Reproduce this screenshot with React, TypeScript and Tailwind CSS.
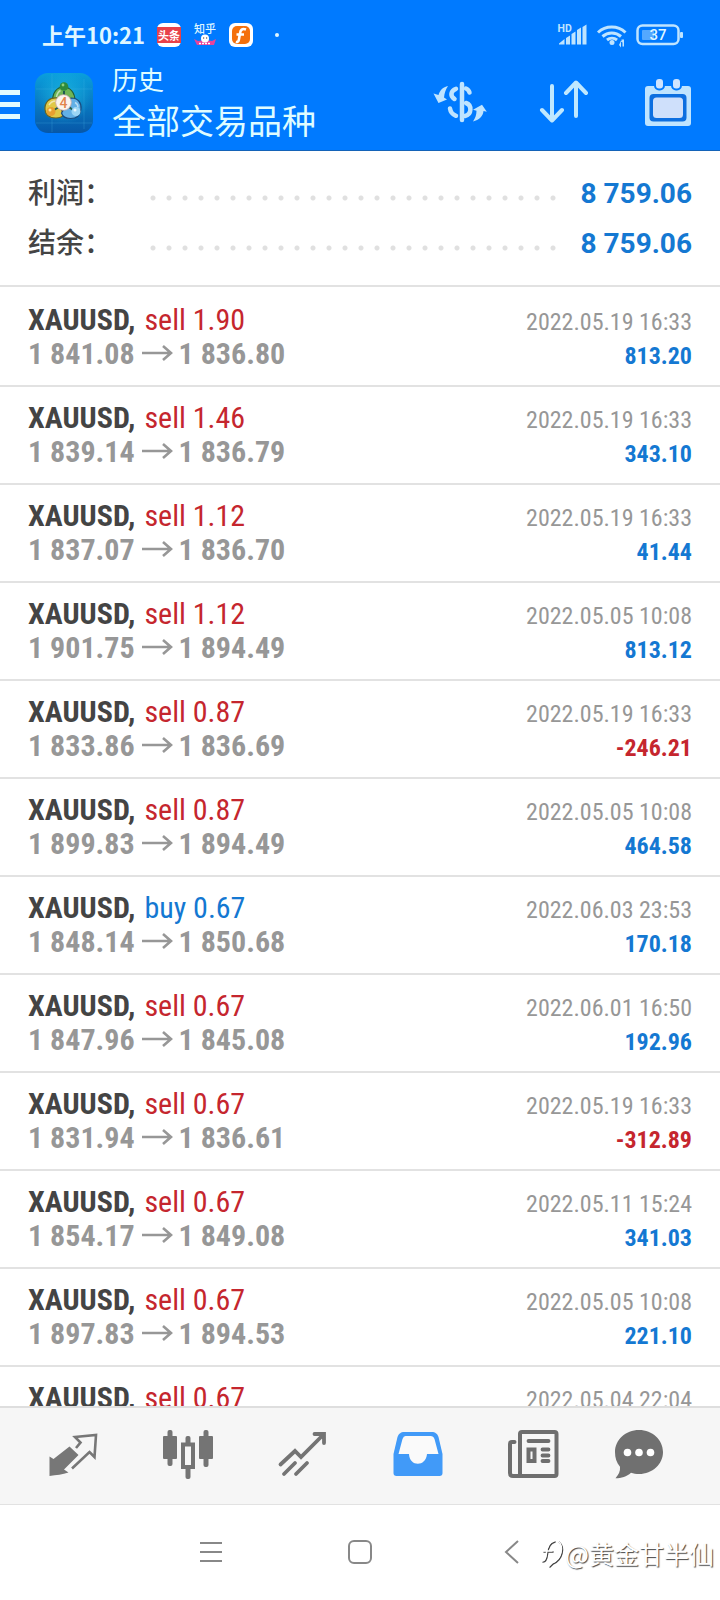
import type { ReactNode } from 'react';

type Deal = {
  side: 'sell' | 'buy';
  volume: string;
  open: string;
  close: string;
  time: string;
  profit: string;
};

const deals: Deal[] = [
  { side: 'sell', volume: '1.90', open: '1 841.08', close: '1 836.80', time: '2022.05.19 16:33', profit: '813.20' },
  { side: 'sell', volume: '1.46', open: '1 839.14', close: '1 836.79', time: '2022.05.19 16:33', profit: '343.10' },
  { side: 'sell', volume: '1.12', open: '1 837.07', close: '1 836.70', time: '2022.05.19 16:33', profit: '41.44' },
  { side: 'sell', volume: '1.12', open: '1 901.75', close: '1 894.49', time: '2022.05.05 10:08', profit: '813.12' },
  { side: 'sell', volume: '0.87', open: '1 833.86', close: '1 836.69', time: '2022.05.19 16:33', profit: '-246.21' },
  { side: 'sell', volume: '0.87', open: '1 899.83', close: '1 894.49', time: '2022.05.05 10:08', profit: '464.58' },
  { side: 'buy', volume: '0.67', open: '1 848.14', close: '1 850.68', time: '2022.06.03 23:53', profit: '170.18' },
  { side: 'sell', volume: '0.67', open: '1 847.96', close: '1 845.08', time: '2022.06.01 16:50', profit: '192.96' },
  { side: 'sell', volume: '0.67', open: '1 831.94', close: '1 836.61', time: '2022.05.19 16:33', profit: '-312.89' },
  { side: 'sell', volume: '0.67', open: '1 854.17', close: '1 849.08', time: '2022.05.11 15:24', profit: '341.03' },
  { side: 'sell', volume: '0.67', open: '1 897.83', close: '1 894.53', time: '2022.05.05 10:08', profit: '221.10' },
  { side: 'sell', volume: '0.67', open: '', close: '', time: '2022.05.04 22:04', profit: '' },
];

const summary = [
  { label: '利润', value: '8 759.06' },
  { label: '结余', value: '8 759.06' },
];

function StatusBar() {
  return (
    <div className="flex h-[70px] items-center justify-between pl-[42px] pr-[37px] text-[#dff6ff]">
      <div className="flex items-center">
        <span className="pb-[2px] text-[22px] leading-8 font-bold">上午10:21</span>
        <span className="ml-3 flex h-6 w-6 items-center justify-center rounded-md bg-white">
          <span className="flex h-4 w-6 items-center justify-center bg-[#e8414a] text-[11px] leading-none font-bold text-white">头条</span>
        </span>
        <span className="ml-3 flex h-6 w-6 flex-col items-center text-[11px] leading-none font-medium">
          <span className="whitespace-nowrap">知乎</span>
          <svg width="24" height="12" viewBox="0 0 24 12" aria-hidden="true">
            <path d="M1 5l4 2 7-1 7 1 4-2-2 6H4z" fill="#e7439a" />
            <circle cx="12" cy="4.500" r="4" fill="#fff" />
            <path d="M10 4h1.200M13 4h1.200" stroke="#333" />
            <path d="M6 9.500h12" stroke="#fff" strokeWidth="1.500" strokeDasharray="2 1" />
          </svg>
        </span>
        <svg className="ml-3" width="24" height="24" viewBox="0 0 24 24" aria-hidden="true">
          <rect width="24" height="24" rx="6" fill="#fff" />
          <rect x="3" y="3" width="18" height="18" rx="5" fill="#f4700c" />
          <path d="M17 6.500c-4-1.500-5.500.5-6 4L9.800 17c-.3 1.600-1.500 2.300-3 2M7.500 11.500H15" fill="none" stroke="#fff" strokeWidth="2.600" />
        </svg>
        <span className="ml-[22px] h-1 w-1 rounded-full bg-[#dff6ff]" />
      </div>
      <svg width="126" height="26" viewBox="557 22 126 26" fill="none" aria-hidden="true">
        <text x="557.500" y="32" fontSize="10.500" fontWeight="700" fontFamily="Roboto, sans-serif" fill="#bfe4ff">HD</text>
        <g fill="#bfe4ff">
          <path d="M559 44.500v-1l5.500-4.500v5.500zM566 38l4-2.500v9h-4zM571.500 34l4-2.500v13h-4zM577 30l4-2.500v17h-4zM582.500 27l4-2.500v20h-4z" />
          <circle cx="612" cy="42.500" r="2.500" />
          <path d="M620 41h1.500v-1.500l2.500 0v7h-1.500v-4zM619 45l2 2.500V41z" />
          <rect x="680" y="32" width="3" height="6" rx="1" />
        </g>
        <path d="M598 32.500a20 20 0 0 1 27.500 0M602.500 36.500a14 14 0 0 1 18.500 0M607 40a8 8 0 0 1 10 0" stroke="#bfe4ff" strokeWidth="3" />
        <rect x="637.500" y="25.500" width="41" height="18.500" rx="5" stroke="#bfe4ff" strokeWidth="2.500" />
        <rect x="642" y="30" width="12" height="10" rx="1" fill="#54a8ff" />
        <text x="658" y="40" textAnchor="middle" fontSize="15" fontWeight="500" fontFamily="Roboto, sans-serif" fill="#dff6ff">37</text>
      </svg>
    </div>
  );
}

function AppLogo() {
  return (
    <svg width="60" height="60" viewBox="0 0 60 60" aria-hidden="true">
      <defs>
        <linearGradient id="tile" x1="0" y1="0" x2="0" y2="1">
          <stop offset="0" stopColor="#0a9fdc" />
          <stop offset="1" stopColor="#0757a8" />
        </linearGradient>
        <radialGradient id="glow">
          <stop offset="0" stopColor="#1fc0e4" stopOpacity=".75" />
          <stop offset="1" stopColor="#1fc0e4" stopOpacity="0" />
        </radialGradient>
      </defs>
      <rect x="1" width="58" height="60" rx="13" fill="url(#tile)" />
      <circle cx="30" cy="24" r="27" fill="url(#glow)" />
      <path d="M18 1v58M50 6v50M2 16h56M2 50h56" stroke="#49bde8" strokeOpacity=".25" />
      <path d="M18.500 28c0-8 4-14 11-14s11.500 6 11.500 14l-5 5H24z" fill="#6fb556" stroke="#1f5c33" strokeWidth="1.200" />
      <path d="M23 25c-8-1-12.500 5-12 11.500.3 6 5 8.500 11 8.500 3 0 6-1 7.500-3z" fill="#dfc947" stroke="#6b6420" strokeWidth="1.200" />
      <path d="M37 25c7.500 0 10.500 5 10 11-.5 6.500-5 9.500-10.500 9.500-5 0-8-2-9-5.500z" fill="#62b0e6" stroke="#1b4d80" strokeWidth="1.200" />
      <path d="M22.500 24c.5-3 2-5.500 4-6.500M15 32c1.500-2.500 4-4 6.500-4M41 29.500c2 1 3 3 3 5" fill="none" stroke="#fff" strokeOpacity=".55" strokeWidth="1.500" />
      <path d="M30 18v6M20 37l5-3M39 37l-4-3" stroke="#1f5c50" strokeWidth="2" />
      <circle cx="30" cy="13.500" r="4.300" fill="#2d8a3c" />
      <circle cx="29" cy="12" r="1.400" fill="#8fd07c" />
      <circle cx="17" cy="38.500" r="4.500" fill="#e8a030" />
      <circle cx="16" cy="37" r="1.500" fill="#fbeaa0" />
      <circle cx="42" cy="38.500" r="4.500" fill="#9bd6f5" />
      <circle cx="41" cy="37" r="1.500" fill="#e8f7ff" />
      <circle cx="29.500" cy="29.500" r="7.800" fill="#fbf5ee" stroke="#caa" strokeWidth=".8" />
      <text x="29.500" y="34.500" textAnchor="middle" fontSize="14" fontWeight="500" fontFamily="Roboto, sans-serif" fill="#e2854e">4</text>
    </svg>
  );
}

function DollarIcon() {
  return (
    <svg width="54" height="42" viewBox="433 81 54 42" fill="none" stroke="#bfe4ff" aria-hidden="true">
      <path d="M462 84v36" strokeWidth="4.500" strokeLinecap="round" />
      <path d="M456 88.800c-5 1.700-6.500 7-1.500 10.200M466 88.500c2 .8 3 2 3.500 4M450 108.500c.5 3.500 2.500 6 6 7.300M466 103c6 2 6 11.500-1 13" strokeWidth="4.500" strokeLinecap="round" />
      <path d="M448 86c-5 1-8 4-9.500 9l-5-1.500 5 9.500 8.500-3.500-3-2c.5-4.500 1.500-7.500 4-11.500z" fill="#bfe4ff" stroke="none" />
      <path d="M473 121.500c6-1.500 10-5 10.500-10.500l3.300.8-4.800-7-9 5 3.500 1c0 4-1 7-3.500 10.700z" fill="#bfe4ff" stroke="none" />
    </svg>
  );
}

function SortIcon() {
  return (
    <svg width="50" height="44" viewBox="539 81 50 44" fill="none" stroke="#bfe8ff" strokeWidth="4" strokeLinecap="round" strokeLinejoin="round" aria-hidden="true">
      <path d="M552 87v34M542 111l10 10.500 10-10.500M576 117V84M566 94l10-10.500 10 10.500" />
    </svg>
  );
}

function CalendarIcon() {
  return (
    <svg width="46" height="48" viewBox="645 78 46 48" aria-hidden="true">
      <rect x="645" y="86" width="46" height="40" rx="3" fill="#bfe4ff" />
      <g fill="#cfe4ff" stroke="#007aff" strokeWidth="2">
        <rect x="655" y="78" width="9" height="11.500" rx="4" />
        <rect x="672" y="78" width="9" height="11.500" rx="4" />
      </g>
      <rect x="649.500" y="94" width="37" height="27.500" rx="4" fill="#0d6fe0" />
      <rect x="653" y="97.500" width="30" height="20.500" rx="3.500" fill="#cfe0fb" />
    </svg>
  );
}

function Header() {
  return (
    <header className="shrink-0 border-b border-[#1463b8] bg-[#007aff]">
      <StatusBar />
      <div className="flex h-20 items-start">
        <button type="button" aria-label="菜单" className="mt-5 flex w-5 flex-col gap-[7px]">
          <span className="h-[5px] w-5 bg-[#e0fbff]" />
          <span className="h-[5px] w-5 bg-[#e0fbff]" />
          <span className="h-[5px] w-5 bg-[#e0fbff]" />
        </button>
        <div className="mt-[3px] ml-[14px]">
          <AppLogo />
        </div>
        <h1 className="-mt-[9px] ml-[18px] flex flex-1 flex-col font-normal text-[#dffcff]">
          <span className="text-[26px] leading-[36px]">历史</span>
          <span className="text-[34px] leading-[46px] whitespace-nowrap">全部交易品种</span>
        </h1>
        <button type="button" aria-label="货币" className="flex h-16 w-[104px] items-center justify-center"><DollarIcon /></button>
        <button type="button" aria-label="排序" className="flex h-16 w-[104px] items-center justify-center"><SortIcon /></button>
        <button type="button" aria-label="日期" className="flex h-16 w-[104px] items-center justify-center"><CalendarIcon /></button>
      </div>
    </header>
  );
}

function Summary() {
  return (
    <dl className="flex h-[136px] flex-col border-b-2 border-[#e2e2e2] pt-4">
      {summary.map((item) => (
        <div key={item.label} className="flex h-[50px] items-center px-7">
          <dt className="w-[117px] pb-[2px] text-[28px] leading-10 font-medium text-[#444]">{item.label}：</dt>
          <dd className="flex flex-1 items-center">
            <span className="mt-3 h-4 flex-1 bg-[radial-gradient(circle,#e0e0e0_2px,transparent_3px)] bg-[length:16px_16px]" />
            <span className="w-[131px] pt-1 text-right font-[Roboto] text-[28px] leading-10 font-bold text-[#1478d2]">{item.value}</span>
          </dd>
        </div>
      ))}
    </dl>
  );
}

function DealRow({ deal }: { deal: Deal }) {
  return (
    <li className="h-[98px] shrink-0 border-b-2 border-[#e2e2e2] px-7 pt-[14px] font-['Roboto_Condensed','Liberation_Sans_Narrow',Roboto,sans-serif]">
      <div className="flex h-[34px] items-baseline justify-between leading-[34px]">
        <span className="flex gap-[9px] text-[30px]">
          <b className="font-bold text-[#444]">XAUUSD,</b>
          <span className={deal.side === 'buy' ? 'text-[#1478d2]' : 'text-[#c5262e]'}>
            {deal.side} {deal.volume}
          </span>
        </span>
        <time className="text-2xl leading-[34px] text-[#979797]">{deal.time}</time>
      </div>
      {deal.open && (
        <div className="flex h-[34px] items-baseline justify-between leading-[34px] font-bold">
          <span className="flex items-baseline gap-[6px] text-[30px] text-[#979797]">
            {deal.open}
            <svg width="32" height="18" viewBox="0 0 32 18" fill="none" stroke="#979797" strokeWidth="2.600" className="self-center" aria-label="→">
              <path d="M1 8h29M22 1l8 7-8 7" />
            </svg>
            {deal.close}
          </span>
          <span className={deal.profit.startsWith('-') ? 'text-2xl leading-[34px] text-[#c5262e]' : 'text-2xl leading-[34px] text-[#1478d2]'}>{deal.profit}</span>
        </div>
      )}
    </li>
  );
}

function Tab({ label, last, children }: { label: string; last?: boolean; children: ReactNode }) {
  return (
    <button type="button" aria-label={label} className={last ? 'flex flex-[98] justify-center' : 'flex flex-[115] justify-center'}>
      {children}
    </button>
  );
}

function TabBar() {
  return (
    <nav className="flex h-[99px] shrink-0 items-start border-t-2 border-b border-t-[#dedede] border-b-[#e2e2e2] bg-[#f6f6f6] pt-5 pr-8 pl-4">
      <Tab label="行情">
        <svg width="52" height="52" viewBox="47 1428 52 52" fill="#777" aria-hidden="true">
          <path d="M69.500 1446.500l9 8.500-14.500 14.500 4.500 3c-6 2-12 2.500-19 3.500v-19.500l4 2.500z" />
          <path d="M76 1448l4.500-5.500-5.500-5.500 21-2-1.500 22-5-5-17.500 16.500" fill="none" stroke="#777" strokeWidth="2.600" />
        </svg>
      </Tab>
      <Tab label="图表">
        <svg width="52" height="52" viewBox="162.500 1428 52 52" fill="#747474" aria-hidden="true">
          <rect x="163.500" y="1436" width="14" height="23" rx="1" />
          <rect x="168" y="1430" width="5" height="36" rx="2" />
          <rect x="199.500" y="1436" width="14" height="23" rx="1" />
          <rect x="204" y="1430" width="5" height="37" rx="2" />
          <rect x="186" y="1436" width="5" height="43" rx="2" />
          <rect x="183.500" y="1444.500" width="10" height="22.500" fill="#f6f6f6" stroke="#747474" strokeWidth="4" />
        </svg>
      </Tab>
      <Tab label="交易">
        <svg width="52" height="52" viewBox="278 1428 52 52" fill="none" stroke="#747474" strokeWidth="3.800" strokeLinecap="round" aria-hidden="true">
          <path d="M281.500 1464.500l14.500-13.500 6 6 22-22M315.500 1434h9.500v9M285 1474l11-11M297 1474l11-11" />
        </svg>
      </Tab>
      <Tab label="历史">
        <svg width="52" height="52" viewBox="392.500 1428 52 52" aria-hidden="true">
          <path d="M405 1432h27c4 0 6 2 7 5l4 17v19q0 3-3 3h-43q-3 0-3-3v-19l4-17c1-3 3-5 7-5z" fill="#419af8" />
          <path d="M406 1436h25q3 0 4 3l4 15h-11.500c-1 13-17.500 13-18 0H399l4-15q1-3 3-3z" fill="#fafafa" />
        </svg>
      </Tab>
      <Tab label="新闻">
        <svg width="52" height="52" viewBox="507.500 1428 52 52" fill="none" stroke="#6e6e6e" strokeWidth="4" aria-hidden="true">
          <rect x="520.500" y="1432" width="36.500" height="44" rx="2" />
          <path d="M515 1442h-2.500q-2 0-2 2v29q0 3 3 3h8" strokeLinecap="round" />
          <path d="M529 1441h20M543 1449.500h6M543 1455.500h6M543 1461h6" strokeLinecap="round" strokeWidth="3.800" />
          <rect x="529" y="1449.500" width="6" height="11.500" strokeWidth="4" />
        </svg>
      </Tab>
      <Tab label="消息" last>
        <svg width="52" height="52" viewBox="613 1428 52 52" aria-hidden="true">
          <path d="M639 1430c13.500 0 24 9.800 24 22s-10.500 22-24 22c-3 0-5.500-.4-8-1.300-4.500 4-9.500 5.500-15.500 5.500 3-3.500 5-7 4.500-11.500-3.500-4-5-9-5-14.700 0-12.200 10.500-22 24-22z" fill="#707070" />
          <g fill="#fff">
            <circle cx="627.500" cy="1452.500" r="3.800" />
            <circle cx="639" cy="1452.500" r="3.800" />
            <circle cx="650.500" cy="1452.500" r="3.800" />
          </g>
        </svg>
      </Tab>
    </nav>
  );
}

function SystemBar() {
  return (
    <footer className="relative flex h-[95px] shrink-0 items-center justify-center bg-white pb-[2px]">
      <button type="button" aria-label="最近任务" className="flex w-[150px] justify-center">
        <svg width="24" height="24" viewBox="0 0 24 24" stroke="#888" strokeWidth="2" aria-hidden="true"><path d="M2 3h22M2 12h22M2 21h22" /></svg>
      </button>
      <button type="button" aria-label="主屏幕" className="flex w-[150px] justify-center">
        <svg width="26" height="26" viewBox="0 0 26 26" fill="none" stroke="#888" strokeWidth="2" aria-hidden="true"><rect x="2" y="2" width="22" height="22" rx="5" /></svg>
      </button>
      <button type="button" aria-label="返回" className="flex w-[150px] justify-center">
        <svg width="24" height="26" viewBox="0 0 24 26" fill="none" stroke="#888" strokeWidth="2" aria-hidden="true"><path d="M20 2L8 13l12 11" /></svg>
      </button>
      <div className="absolute right-[6px] bottom-[31px] flex items-center text-[25px] leading-8 text-white [text-shadow:1px_1px_1px_#444]">
        <svg width="26" height="32" viewBox="537 1542 26 32" fill="none" strokeLinecap="round" aria-hidden="true">
          <path d="M541 1567c3 0 4-3 4.500-8s2.500-11 7.500-12M542 1557h9M557 1547c6 5 4 18-6 22l-3 3" stroke="#444" strokeWidth="1.600" />
          <path d="M540 1566c3 0 4-3 4.500-8s2.500-11 7.500-12M541 1556h9M556 1546c6 5 4 18-6 22l-3 3" stroke="#fff" strokeWidth="1.600" />
        </svg>
        <span>@黄金甘半仙</span>
      </div>
    </footer>
  );
}

export default function App() {
  return (
    <div className="flex h-screen flex-col overflow-hidden bg-white font-['Noto_Sans_CJK_SC',sans-serif]">
      <Header />
      <main className="flex-1 overflow-hidden">
        <Summary />
        <ul className="pt-[2px]">
          {deals.map((deal, index) => (
            <DealRow key={index} deal={deal} />
          ))}
        </ul>
      </main>
      <TabBar />
      <SystemBar />
    </div>
  );
}
